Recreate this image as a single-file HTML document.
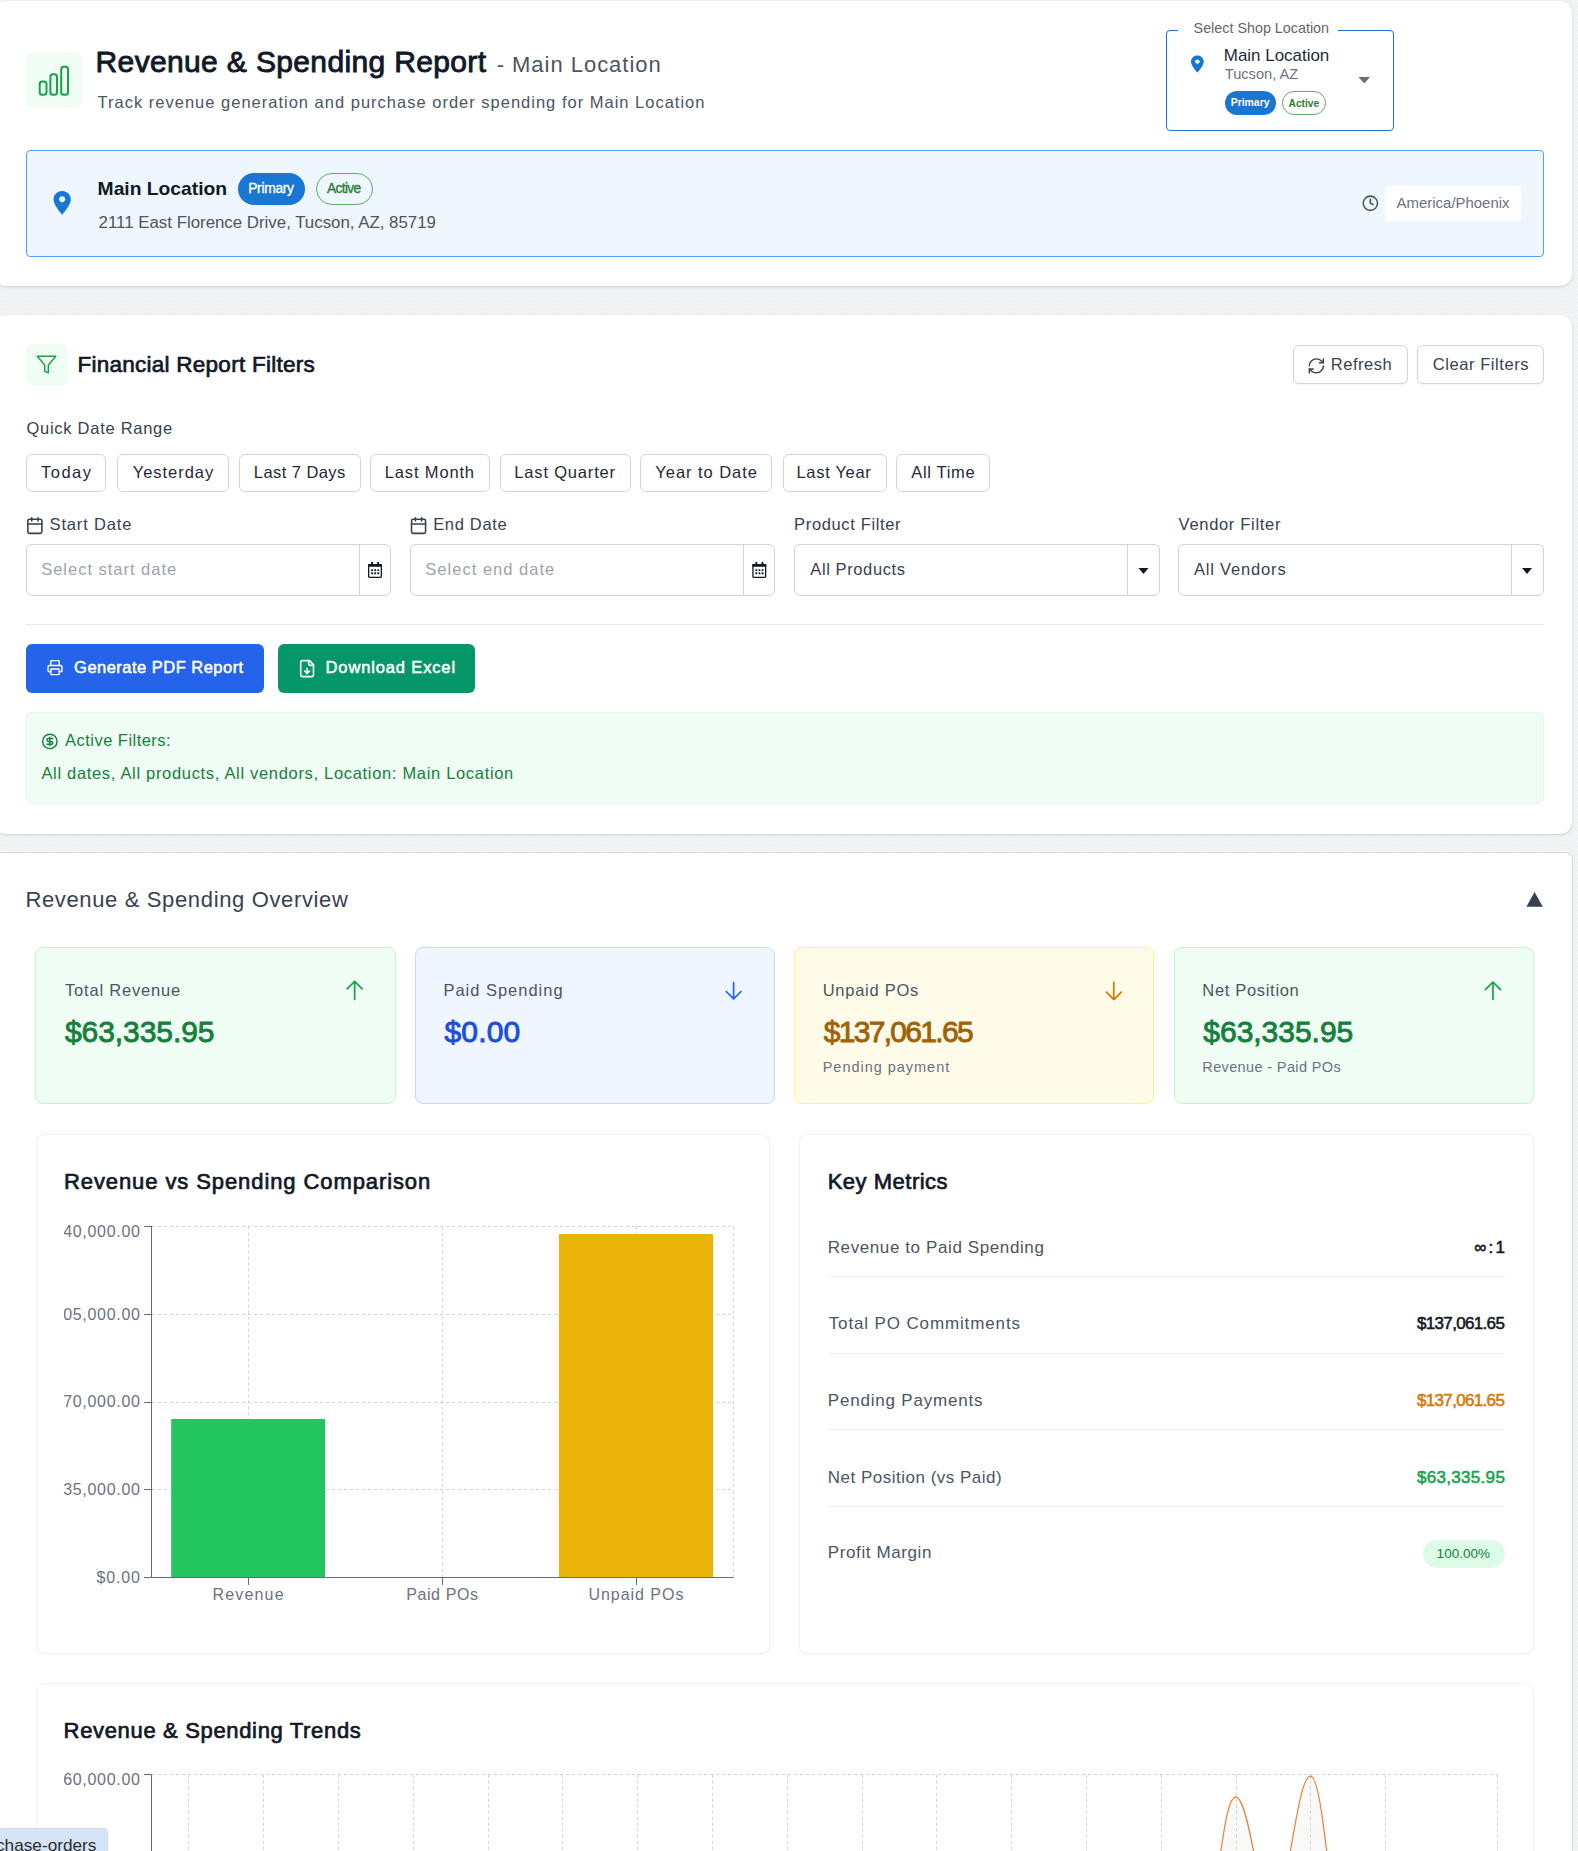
<!DOCTYPE html>
<html><head><meta charset="utf-8"><style>
html,body{margin:0;padding:0;}
body{width:1578px;height:1851px;position:relative;overflow:hidden;background-color:#f3f4f6;background-image:radial-gradient(circle at 1px 1px,rgba(0,0,20,.018) 0.6px,transparent 1px),radial-gradient(circle at 2.5px 3px,rgba(0,0,20,.018) 0.6px,transparent 1px);background-size:3px 4px;font-family:"Liberation Sans",sans-serif;}
.b{position:absolute;}
.t{position:absolute;line-height:1;white-space:nowrap;}
.clip{position:absolute;overflow:hidden;}
svg.ov{position:absolute;left:0;top:0;}
</style></head><body>
<div class="b" style="left:-6.00px;top:1.00px;width:1578.00px;height:285.00px;background:#fff;border-radius:12px;box-shadow:0 1px 3px rgba(0,0,0,.10),0 1px 2px rgba(0,0,0,.06)"></div>
<div class="b" style="left:-6.00px;top:315.00px;width:1578.00px;height:519.00px;background:#fff;border-radius:12px;box-shadow:0 1px 3px rgba(0,0,0,.10),0 1px 2px rgba(0,0,0,.06)"></div>
<div class="b" style="left:-5.00px;top:852.00px;width:1578.00px;height:1048.00px;background:#fff;border-radius:8px;border:1px solid #d7dbe0;box-sizing:border-box"></div>
<div class="b" style="left:26.00px;top:52.00px;width:56.00px;height:56.00px;background:#f0fdf4;border-radius:8px"></div>
<div class="b" style="left:1166.00px;top:30.00px;width:228.00px;height:101.00px;border:1px solid #1976d2;border-radius:4px;box-sizing:border-box"></div>
<div class="b" style="left:1178.00px;top:26.00px;width:160.00px;height:8.00px;background:#fff"></div>
<div class="b" style="left:1225.00px;top:91.00px;width:51.00px;height:24.00px;background:#1976d2;border-radius:12px"></div>
<div class="b" style="left:1281.70px;top:91.00px;width:44.10px;height:24.00px;border:1px solid #66a86a;border-radius:12px;box-sizing:border-box"></div>
<div class="b" style="left:26.00px;top:150.00px;width:1518.00px;height:107.00px;background:#eef6fe;border:1px solid #4fa3f3;border-radius:4px;box-sizing:border-box"></div>
<div class="b" style="left:238.00px;top:173.00px;width:67.00px;height:32.00px;background:#1976d2;border-radius:16px"></div>
<div class="b" style="left:316.00px;top:173.00px;width:57.00px;height:32.00px;border:1px solid #66a86a;border-radius:16px;box-sizing:border-box"></div>
<div class="b" style="left:1385.00px;top:186.00px;width:136.00px;height:35.00px;background:#fff;border-radius:4px"></div>
<div class="b" style="left:26.00px;top:344.00px;width:42.00px;height:42.00px;background:#f0fdf4;border-radius:8px"></div>
<div class="b" style="left:1292.60px;top:345.40px;width:115.00px;height:39.10px;background:#fff;border:1px solid #d1d5db;border-radius:6px;box-sizing:border-box;box-shadow:0 1px 2px rgba(0,0,0,.05)"></div>
<div class="b" style="left:1417.30px;top:345.40px;width:126.30px;height:39.10px;background:#fff;border:1px solid #d1d5db;border-radius:6px;box-sizing:border-box;box-shadow:0 1px 2px rgba(0,0,0,.05)"></div>
<div class="b" style="left:26.30px;top:453.60px;width:80.20px;height:38.00px;background:#fff;border:1px solid #d1d5db;border-radius:6px;box-sizing:border-box"></div>
<div class="b" style="left:117.30px;top:453.60px;width:112.10px;height:38.00px;background:#fff;border:1px solid #d1d5db;border-radius:6px;box-sizing:border-box"></div>
<div class="b" style="left:239.30px;top:453.60px;width:121.30px;height:38.00px;background:#fff;border:1px solid #d1d5db;border-radius:6px;box-sizing:border-box"></div>
<div class="b" style="left:370.10px;top:453.60px;width:119.50px;height:38.00px;background:#fff;border:1px solid #d1d5db;border-radius:6px;box-sizing:border-box"></div>
<div class="b" style="left:500.30px;top:453.60px;width:130.30px;height:38.00px;background:#fff;border:1px solid #d1d5db;border-radius:6px;box-sizing:border-box"></div>
<div class="b" style="left:640.30px;top:453.60px;width:131.50px;height:38.00px;background:#fff;border:1px solid #d1d5db;border-radius:6px;box-sizing:border-box"></div>
<div class="b" style="left:782.50px;top:453.60px;width:104.10px;height:38.00px;background:#fff;border:1px solid #d1d5db;border-radius:6px;box-sizing:border-box"></div>
<div class="b" style="left:896.30px;top:453.60px;width:93.40px;height:38.00px;background:#fff;border:1px solid #d1d5db;border-radius:6px;box-sizing:border-box"></div>
<div class="b" style="left:26.00px;top:544.00px;width:365.00px;height:52.00px;background:#fff;border:1px solid #cfd4da;border-radius:6px;box-sizing:border-box"></div>
<div class="b" style="left:359.00px;top:545.00px;width:1.00px;height:50.00px;background:#cfd4da"></div>
<div class="b" style="left:410.00px;top:544.00px;width:365.00px;height:52.00px;background:#fff;border:1px solid #cfd4da;border-radius:6px;box-sizing:border-box"></div>
<div class="b" style="left:743.00px;top:545.00px;width:1.00px;height:50.00px;background:#cfd4da"></div>
<div class="b" style="left:794.00px;top:544.00px;width:366.00px;height:52.00px;background:#fff;border:1px solid #cfd4da;border-radius:6px;box-sizing:border-box"></div>
<div class="b" style="left:1127.00px;top:545.00px;width:1.00px;height:50.00px;background:#cfd4da"></div>
<div class="b" style="left:1178.00px;top:544.00px;width:366.00px;height:52.00px;background:#fff;border:1px solid #cfd4da;border-radius:6px;box-sizing:border-box"></div>
<div class="b" style="left:1511.00px;top:545.00px;width:1.00px;height:50.00px;background:#cfd4da"></div>
<div class="b" style="left:26.00px;top:623.50px;width:1518.00px;height:1.20px;background:#e5e7eb"></div>
<div class="b" style="left:26.00px;top:644.00px;width:238.00px;height:48.60px;background:#2563eb;border-radius:6px"></div>
<div class="b" style="left:278.00px;top:644.00px;width:196.80px;height:48.60px;background:#059669;border-radius:6px"></div>
<div class="b" style="left:26.00px;top:712.20px;width:1518.00px;height:91.60px;background:#f0fdf4;border:1px solid #dcfce7;border-radius:6px;box-sizing:border-box"></div>
<div class="b" style="left:35.10px;top:946.90px;width:360.70px;height:157.40px;background:#f0fdf4;border:1px solid #bbf7d0;border-radius:8px;box-sizing:border-box"></div>
<div class="b" style="left:414.90px;top:946.90px;width:359.90px;height:157.40px;background:#eff6ff;border:1px solid #bfdbfe;border-radius:8px;box-sizing:border-box"></div>
<div class="b" style="left:794.30px;top:946.90px;width:360.20px;height:157.40px;background:#fefce8;border:1px solid #fef08a;border-radius:8px;box-sizing:border-box"></div>
<div class="b" style="left:1174.20px;top:946.90px;width:359.50px;height:157.40px;background:#f0fdf4;border:1px solid #bbf7d0;border-radius:8px;box-sizing:border-box"></div>
<div class="b" style="left:35.60px;top:1134.30px;width:734.90px;height:519.70px;background:#fff;border:1px solid #f1f2f4;border-radius:8px;box-sizing:border-box;box-shadow:0 1px 2px rgba(0,0,0,.04)"></div>
<div class="b" style="left:799.40px;top:1133.80px;width:734.60px;height:520.20px;background:#fff;border:1px solid #f1f2f4;border-radius:8px;box-sizing:border-box;box-shadow:0 1px 2px rgba(0,0,0,.04)"></div>
<div class="b" style="left:35.50px;top:1682.50px;width:1498.50px;height:217.50px;background:#fff;border:1px solid #f1f2f4;border-radius:8px;box-sizing:border-box;box-shadow:0 1px 2px rgba(0,0,0,.04)"></div>
<div class="b" style="left:828.70px;top:1275.80px;width:676.30px;height:1.00px;background:#eceef1"></div>
<div class="b" style="left:828.70px;top:1352.80px;width:676.30px;height:1.00px;background:#eceef1"></div>
<div class="b" style="left:828.70px;top:1428.80px;width:676.30px;height:1.00px;background:#eceef1"></div>
<div class="b" style="left:828.70px;top:1505.80px;width:676.30px;height:1.00px;background:#eceef1"></div>
<div class="b" style="left:1423.00px;top:1540.00px;width:82.00px;height:27.80px;background:#dcfce7;border-radius:14px"></div>
<div class="b" style="left:-2.00px;top:1828.30px;width:109.70px;height:31.70px;background:#d6e4f8;border:1px solid #d0dcee;border-radius:4px;box-sizing:border-box"></div>
<svg class="ov" width="1578" height="1851" viewBox="0 0 1578 1851">
<rect x="39.7" y="81.5" width="6.799999999999997" height="13.200000000000003" rx="2.5" fill="none" stroke="#16a34a" stroke-width="2"/>
<rect x="50.4" y="74.3" width="6.600000000000001" height="20.400000000000006" rx="2.5" fill="none" stroke="#16a34a" stroke-width="2"/>
<rect x="61.2" y="66.7" width="6.799999999999997" height="28.0" rx="2.5" fill="none" stroke="#16a34a" stroke-width="2"/>
<g transform="translate(1186.43,53.89) scale(0.914,0.855)"><path d="M12 2C8.13 2 5 5.13 5 9c0 5.25 7 13 7 13s7-7.75 7-13c0-3.87-3.13-7-7-7zm0 9.5c-1.38 0-2.5-1.12-2.5-2.5s1.12-2.5 2.5-2.5 2.5 1.12 2.5 2.5-1.12 2.5-2.5 2.5z" fill="#1976d2"/></g>
<g transform="translate(47.32,188.63) scale(1.236,1.185)"><path d="M12 2C8.13 2 5 5.13 5 9c0 5.25 7 13 7 13s7-7.75 7-13c0-3.87-3.13-7-7-7zm0 9.5c-1.38 0-2.5-1.12-2.5-2.5s1.12-2.5 2.5-2.5 2.5 1.12 2.5 2.5-1.12 2.5-2.5 2.5z" fill="#1976d2"/></g>
<path d="M1358.5 77 L1370 77 L1364.25 83.5 Z" fill="#6b6f76"/>
<g transform="translate(1362.4,195.3) scale(0.6625)" fill="none" stroke="#4b5563" stroke-width="2.4" stroke-linecap="round" stroke-linejoin="round"><circle cx="12" cy="12" r="10.8"/><polyline points="12 6 12 12 16 14"/></g>
<g transform="translate(35.5,353.5) scale(0.92)" fill="none" stroke="#16a34a" stroke-width="1.6" stroke-linejoin="round"><polygon points="22 3 2 3 10 12.46 10 19 14 21 14 12.46 22 3"/></g>
<g transform="translate(1307,356.5) scale(0.78)" fill="none" stroke="#374151" stroke-width="1.8" stroke-linecap="round" stroke-linejoin="round"><path d="M3 12a9 9 0 0 1 9-9 9.75 9.75 0 0 1 6.74 2.74L21 8"/><path d="M21 3v5h-5"/><path d="M21 12a9 9 0 0 1-9 9 9.75 9.75 0 0 1-6.74-2.74L3 16"/><path d="M8 16H3v5"/></g>
<g transform="translate(25.50,516.2) scale(0.78)" fill="none" stroke="#374151" stroke-width="2" stroke-linecap="round" stroke-linejoin="round"><rect x="3" y="4" width="18" height="18" rx="2"/><path d="M16 2v4"/><path d="M8 2v4"/><path d="M3 10h18"/></g>
<g transform="translate(409.20,516.2) scale(0.78)" fill="none" stroke="#374151" stroke-width="2" stroke-linecap="round" stroke-linejoin="round"><rect x="3" y="4" width="18" height="18" rx="2"/><path d="M16 2v4"/><path d="M8 2v4"/><path d="M3 10h18"/></g>
<g transform="translate(368,562)"><rect x="0.65" y="2.6" width="12.7" height="12.7" rx="0.8" fill="none" stroke="#111827" stroke-width="1.3"/><rect x="0" y="2" width="14" height="2.8" rx="0.8" fill="#111827"/><rect x="3.1" y="0" width="1.9" height="3.4" fill="#111827"/><rect x="9.2" y="0" width="1.9" height="3.4" fill="#111827"/><rect x="3.1" y="7.2" width="1.9" height="1.9" rx="0.5" fill="#111827"/><rect x="3.1" y="10.3" width="1.9" height="1.9" rx="0.5" fill="#111827"/><rect x="6.2" y="7.2" width="1.9" height="1.9" rx="0.5" fill="#111827"/><rect x="6.2" y="10.3" width="1.9" height="1.9" rx="0.5" fill="#111827"/><rect x="9.3" y="7.2" width="1.9" height="1.9" rx="0.5" fill="#111827"/><rect x="9.3" y="10.3" width="1.9" height="1.9" rx="0.5" fill="#111827"/></g>
<g transform="translate(752.3,562)"><rect x="0.65" y="2.6" width="12.7" height="12.7" rx="0.8" fill="none" stroke="#111827" stroke-width="1.3"/><rect x="0" y="2" width="14" height="2.8" rx="0.8" fill="#111827"/><rect x="3.1" y="0" width="1.9" height="3.4" fill="#111827"/><rect x="9.2" y="0" width="1.9" height="3.4" fill="#111827"/><rect x="3.1" y="7.2" width="1.9" height="1.9" rx="0.5" fill="#111827"/><rect x="3.1" y="10.3" width="1.9" height="1.9" rx="0.5" fill="#111827"/><rect x="6.2" y="7.2" width="1.9" height="1.9" rx="0.5" fill="#111827"/><rect x="6.2" y="10.3" width="1.9" height="1.9" rx="0.5" fill="#111827"/><rect x="9.3" y="7.2" width="1.9" height="1.9" rx="0.5" fill="#111827"/><rect x="9.3" y="10.3" width="1.9" height="1.9" rx="0.5" fill="#111827"/></g>
<path d="M1138.5 568 L1148.5 568 L1143.5 574 Z" fill="#111827"/>
<path d="M1522 568 L1532 568 L1527 574 Z" fill="#111827"/>
<g transform="translate(46.6,659.2) scale(0.7)" fill="none" stroke="#fff" stroke-width="2" stroke-linecap="round" stroke-linejoin="round"><path d="M6 18H4a2 2 0 0 1-2-2v-5a2 2 0 0 1 2-2h16a2 2 0 0 1 2 2v5a2 2 0 0 1-2 2h-2"/><path d="M6 9V3a1 1 0 0 1 1-1h10a1 1 0 0 1 1 1v6"/><rect x="6" y="14" width="12" height="8" rx="1"/></g>
<g transform="translate(297.5,659) scale(0.8)" fill="none" stroke="#fff" stroke-width="2" stroke-linecap="round" stroke-linejoin="round"><path d="M15 2H6a2 2 0 0 0-2 2v16a2 2 0 0 0 2 2h12a2 2 0 0 0 2-2V7Z"/><path d="M14 2v4a2 2 0 0 0 2 2h4"/><path d="M12 18v-6"/><path d="m9 15 3 3 3-3"/></g>
<g transform="translate(41.2,732.8) scale(0.72)" fill="none" stroke="#15803d" stroke-width="2" stroke-linecap="round" stroke-linejoin="round"><circle cx="12" cy="12" r="10"/><path d="M16 8h-6a2 2 0 1 0 0 4h4a2 2 0 1 1 0 4H8"/><path d="M12 18V6"/></g>
<path d="M1526.4 906.8 L1534.6 892 L1542.8 906.8 Z" fill="#374151"/>
<path d="M354.65 999.3000000000001 V981.4 M347.2 988.85 L354.65 981.4 L362.09999999999997 988.85" fill="none" stroke="#16a34a" stroke-width="1.7" stroke-linecap="round" stroke-linejoin="round"/>
<path d="M733.5999999999999 982.5 V998.9000000000001 M726.1999999999999 991.5000000000001 L733.5999999999999 998.9000000000001 L740.9999999999999 991.5000000000001" fill="none" stroke="#2563eb" stroke-width="1.7" stroke-linecap="round" stroke-linejoin="round"/>
<path d="M1113.8 982.1999999999999 V999.6 M1106.3999999999999 992.1999999999999 L1113.8 999.6 L1121.2 992.1999999999999" fill="none" stroke="#d97706" stroke-width="1.7" stroke-linecap="round" stroke-linejoin="round"/>
<path d="M1492.9499999999998 999.2 V982.0 M1485.3999999999999 989.5500000000001 L1492.9499999999998 982.0 L1500.4999999999998 989.5500000000001" fill="none" stroke="#16a34a" stroke-width="1.7" stroke-linecap="round" stroke-linejoin="round"/>
<path d="M152 1226.5 H733.5" style="stroke:#cfd3d8;stroke-width:1;stroke-dasharray:3 3;fill:none"/>
<path d="M152 1314.5 H733.5" style="stroke:#cfd3d8;stroke-width:1;stroke-dasharray:3 3;fill:none"/>
<path d="M152 1402.5 H733.5" style="stroke:#cfd3d8;stroke-width:1;stroke-dasharray:3 3;fill:none"/>
<path d="M152 1489.5 H733.5" style="stroke:#cfd3d8;stroke-width:1;stroke-dasharray:3 3;fill:none"/>
<path d="M248.5 1226.5 V1577" style="stroke:#cfd3d8;stroke-width:1;stroke-dasharray:3 3;fill:none"/>
<path d="M442.5 1226.5 V1577" style="stroke:#cfd3d8;stroke-width:1;stroke-dasharray:3 3;fill:none"/>
<path d="M636.5 1226.5 V1577" style="stroke:#cfd3d8;stroke-width:1;stroke-dasharray:3 3;fill:none"/>
<path d="M733.5 1226.5 V1577" style="stroke:#cfd3d8;stroke-width:1;stroke-dasharray:3 3;fill:none"/>
<rect x="171.2" y="1419" width="153.8" height="158.4" fill="#22c55e"/>
<rect x="558.9" y="1234" width="154.1" height="343.4" fill="#eab308"/>
<path d="M151.5 1226 V1577.5 H733.5" style="stroke:#666b73;stroke-width:1;fill:none"/>
<path d="M144 1226.5 H151.5" style="stroke:#666b73;stroke-width:1;fill:none"/>
<path d="M144 1314.5 H151.5" style="stroke:#666b73;stroke-width:1;fill:none"/>
<path d="M144 1402.5 H151.5" style="stroke:#666b73;stroke-width:1;fill:none"/>
<path d="M144 1489.5 H151.5" style="stroke:#666b73;stroke-width:1;fill:none"/>
<path d="M144 1577.5 H151.5" style="stroke:#666b73;stroke-width:1;fill:none"/>
<path d="M248.5 1577.5 V1585" style="stroke:#666b73;stroke-width:1;fill:none"/>
<path d="M442.5 1577.5 V1585" style="stroke:#666b73;stroke-width:1;fill:none"/>
<path d="M636.5 1577.5 V1585" style="stroke:#666b73;stroke-width:1;fill:none"/>
<path d="M152 1774.5 H1497.5" style="stroke:#cfd3d8;stroke-width:1;stroke-dasharray:3 3;fill:none"/>
<path d="M188.5 1774.6 V1860" style="stroke:#cfd3d8;stroke-width:1;stroke-dasharray:3 3;fill:none"/>
<path d="M263.5 1774.6 V1860" style="stroke:#cfd3d8;stroke-width:1;stroke-dasharray:3 3;fill:none"/>
<path d="M338.5 1774.6 V1860" style="stroke:#cfd3d8;stroke-width:1;stroke-dasharray:3 3;fill:none"/>
<path d="M413.5 1774.6 V1860" style="stroke:#cfd3d8;stroke-width:1;stroke-dasharray:3 3;fill:none"/>
<path d="M488.5 1774.6 V1860" style="stroke:#cfd3d8;stroke-width:1;stroke-dasharray:3 3;fill:none"/>
<path d="M562.5 1774.6 V1860" style="stroke:#cfd3d8;stroke-width:1;stroke-dasharray:3 3;fill:none"/>
<path d="M637.5 1774.6 V1860" style="stroke:#cfd3d8;stroke-width:1;stroke-dasharray:3 3;fill:none"/>
<path d="M712.5 1774.6 V1860" style="stroke:#cfd3d8;stroke-width:1;stroke-dasharray:3 3;fill:none"/>
<path d="M787.5 1774.6 V1860" style="stroke:#cfd3d8;stroke-width:1;stroke-dasharray:3 3;fill:none"/>
<path d="M862.5 1774.6 V1860" style="stroke:#cfd3d8;stroke-width:1;stroke-dasharray:3 3;fill:none"/>
<path d="M936.5 1774.6 V1860" style="stroke:#cfd3d8;stroke-width:1;stroke-dasharray:3 3;fill:none"/>
<path d="M1011.5 1774.6 V1860" style="stroke:#cfd3d8;stroke-width:1;stroke-dasharray:3 3;fill:none"/>
<path d="M1086.5 1774.6 V1860" style="stroke:#cfd3d8;stroke-width:1;stroke-dasharray:3 3;fill:none"/>
<path d="M1161.5 1774.6 V1860" style="stroke:#cfd3d8;stroke-width:1;stroke-dasharray:3 3;fill:none"/>
<path d="M1236.5 1774.6 V1860" style="stroke:#cfd3d8;stroke-width:1;stroke-dasharray:3 3;fill:none"/>
<path d="M1310.5 1774.6 V1860" style="stroke:#cfd3d8;stroke-width:1;stroke-dasharray:3 3;fill:none"/>
<path d="M1385.5 1774.6 V1860" style="stroke:#cfd3d8;stroke-width:1;stroke-dasharray:3 3;fill:none"/>
<path d="M1497.5 1774.6 V1860" style="stroke:#cfd3d8;stroke-width:1;stroke-dasharray:3 3;fill:none"/>
<path d="M151.5 1774.5 V1860 M144 1774.5 H151.5" style="stroke:#666b73;stroke-width:1;fill:none"/>
<path d="M1218 1870 C1224 1830 1228 1797 1235.8 1796.8 C1243 1797 1250 1830 1257 1870 Z" fill="rgba(215,215,205,0.15)" stroke="#e6833a" stroke-width="1.2"/>
<path d="M1287 1870 C1296 1820 1302 1776.5 1310.5 1776.2 C1318 1776.5 1323 1820 1329 1870 Z" fill="rgba(215,215,205,0.15)" stroke="#e6833a" stroke-width="1.2"/>
</svg>
<span class="t" style="left:95.60px;top:47.10px;font-size:30.00px;font-weight:400;color:#111827;letter-spacing:0.354px;-webkit-text-stroke:0.9px #111827;">Revenue &amp; Spending Report</span>
<span class="t" style="left:496.70px;top:53.50px;font-size:22.00px;font-weight:400;color:#4b5563;letter-spacing:0.973px;">- Main Location</span>
<span class="t" style="left:97.60px;top:93.97px;font-size:16.50px;font-weight:400;color:#4b5563;letter-spacing:1.001px;">Track revenue generation and purchase order spending for Main Location</span>
<span class="t" style="left:1193.60px;top:20.82px;font-size:14.33px;font-weight:400;color:#666666;letter-spacing:0.000px;">Select Shop Location</span>
<span class="t" style="left:1223.80px;top:47.88px;font-size:16.96px;font-weight:400;color:#1f2937;letter-spacing:0.000px;">Main Location</span>
<span class="t" style="left:1224.80px;top:67.48px;font-size:14.61px;font-weight:400;color:#6b7280;letter-spacing:0.000px;">Tucson, AZ</span>
<span class="t" style="left:1230.70px;top:98.43px;font-size:10.43px;font-weight:700;color:#ffffff;letter-spacing:0.000px;">Primary</span>
<span class="t" style="left:1288.50px;top:98.58px;font-size:10.26px;font-weight:700;color:#2e7d32;letter-spacing:0.000px;">Active</span>
<span class="t" style="left:97.60px;top:178.81px;font-size:19.28px;font-weight:700;color:#111827;letter-spacing:0.000px;">Main Location</span>
<span class="t" style="left:248.20px;top:182.07px;font-size:13.80px;font-weight:400;color:#ffffff;letter-spacing:-0.287px;-webkit-text-stroke:0.35px #ffffff;">Primary</span>
<span class="t" style="left:327.00px;top:182.07px;font-size:13.80px;font-weight:400;color:#2e7d32;letter-spacing:-0.680px;-webkit-text-stroke:0.35px #2e7d32;">Active</span>
<span class="t" style="left:98.60px;top:214.67px;font-size:16.85px;font-weight:400;color:#4b5563;letter-spacing:0.000px;">2111 East Florence Drive, Tucson, AZ, 85719</span>
<span class="t" style="left:1396.60px;top:195.50px;font-size:14.94px;font-weight:400;color:#6b7280;letter-spacing:0.000px;">America/Phoenix</span>
<span class="t" style="left:77.40px;top:353.88px;font-size:22.50px;font-weight:400;color:#111827;letter-spacing:0.262px;-webkit-text-stroke:0.7px #111827;">Financial Report Filters</span>
<span class="t" style="left:1330.70px;top:355.88px;font-size:16.50px;font-weight:400;color:#374151;letter-spacing:0.550px;">Refresh</span>
<span class="t" style="left:1432.80px;top:355.88px;font-size:16.50px;font-weight:400;color:#374151;letter-spacing:0.560px;">Clear Filters</span>
<span class="t" style="left:26.50px;top:419.98px;font-size:16.50px;font-weight:400;color:#374151;letter-spacing:0.724px;">Quick Date Range</span>
<span class="t" style="left:41.05px;top:463.58px;font-size:16.50px;font-weight:400;color:#1f2937;letter-spacing:1.480px;">Today</span>
<span class="t" style="left:132.80px;top:463.58px;font-size:16.50px;font-weight:400;color:#1f2937;letter-spacing:0.947px;">Yesterday</span>
<span class="t" style="left:253.85px;top:463.58px;font-size:16.50px;font-weight:400;color:#1f2937;letter-spacing:0.433px;">Last 7 Days</span>
<span class="t" style="left:384.85px;top:463.58px;font-size:16.50px;font-weight:400;color:#1f2937;letter-spacing:0.839px;">Last Month</span>
<span class="t" style="left:514.30px;top:463.58px;font-size:16.50px;font-weight:400;color:#1f2937;letter-spacing:0.826px;">Last Quarter</span>
<span class="t" style="left:655.30px;top:463.58px;font-size:16.50px;font-weight:400;color:#1f2937;letter-spacing:0.960px;">Year to Date</span>
<span class="t" style="left:796.50px;top:463.58px;font-size:16.50px;font-weight:400;color:#1f2937;letter-spacing:0.686px;">Last Year</span>
<span class="t" style="left:911.30px;top:463.58px;font-size:16.50px;font-weight:400;color:#1f2937;letter-spacing:0.657px;">All Time</span>
<span class="t" style="left:49.60px;top:515.77px;font-size:16.50px;font-weight:400;color:#374151;letter-spacing:0.833px;">Start Date</span>
<span class="t" style="left:433.20px;top:515.77px;font-size:16.50px;font-weight:400;color:#374151;letter-spacing:0.669px;">End Date</span>
<span class="t" style="left:794.10px;top:516.48px;font-size:16.50px;font-weight:400;color:#374151;letter-spacing:0.645px;">Product Filter</span>
<span class="t" style="left:1178.60px;top:516.48px;font-size:16.50px;font-weight:400;color:#374151;letter-spacing:0.696px;">Vendor Filter</span>
<span class="t" style="left:41.20px;top:560.77px;font-size:16.50px;font-weight:400;color:#9ca3af;letter-spacing:0.984px;">Select start date</span>
<span class="t" style="left:425.30px;top:560.77px;font-size:16.50px;font-weight:400;color:#9ca3af;letter-spacing:1.022px;">Select end date</span>
<span class="t" style="left:810.30px;top:560.98px;font-size:16.50px;font-weight:400;color:#374151;letter-spacing:0.601px;">All Products</span>
<span class="t" style="left:1193.90px;top:560.98px;font-size:16.50px;font-weight:400;color:#374151;letter-spacing:0.828px;">All Vendors</span>
<span class="t" style="left:74.10px;top:659.38px;font-size:16.50px;font-weight:400;color:#ffffff;letter-spacing:0.478px;-webkit-text-stroke:0.5px #ffffff;">Generate PDF Report</span>
<span class="t" style="left:325.60px;top:659.38px;font-size:16.50px;font-weight:400;color:#ffffff;letter-spacing:0.858px;-webkit-text-stroke:0.5px #ffffff;">Download Excel</span>
<span class="t" style="left:65.10px;top:732.18px;font-size:16.50px;font-weight:400;color:#15803d;letter-spacing:0.462px;">Active Filters:</span>
<span class="t" style="left:41.40px;top:765.08px;font-size:16.50px;font-weight:400;color:#15803d;letter-spacing:0.680px;">All dates, All products, All vendors, Location: Main Location</span>
<span class="t" style="left:25.40px;top:888.50px;font-size:22.00px;font-weight:400;color:#374151;letter-spacing:0.644px;">Revenue &amp; Spending Overview</span>
<span class="t" style="left:65.00px;top:982.27px;font-size:16.50px;font-weight:400;color:#4b5563;letter-spacing:0.816px;">Total Revenue</span>
<span class="t" style="left:65.00px;top:1017.20px;font-size:30.00px;font-weight:400;color:#15803d;letter-spacing:-0.074px;-webkit-text-stroke:0.9px #15803d;">$63,335.95</span>
<span class="t" style="left:443.40px;top:982.27px;font-size:16.50px;font-weight:400;color:#4b5563;letter-spacing:0.986px;">Paid Spending</span>
<span class="t" style="left:444.40px;top:1017.20px;font-size:30.00px;font-weight:400;color:#1d4ed8;letter-spacing:0.203px;-webkit-text-stroke:0.9px #1d4ed8;">$0.00</span>
<span class="t" style="left:822.70px;top:982.27px;font-size:16.50px;font-weight:400;color:#4b5563;letter-spacing:0.732px;">Unpaid POs</span>
<span class="t" style="left:823.70px;top:1017.20px;font-size:30.00px;font-weight:400;color:#a16207;letter-spacing:-1.685px;-webkit-text-stroke:0.9px #a16207;">$137,061.65</span>
<span class="t" style="left:822.70px;top:1059.58px;font-size:14.50px;font-weight:400;color:#6b7280;letter-spacing:0.977px;">Pending payment</span>
<span class="t" style="left:1202.30px;top:982.27px;font-size:16.50px;font-weight:400;color:#4b5563;letter-spacing:0.683px;">Net Position</span>
<span class="t" style="left:1203.30px;top:1017.20px;font-size:30.00px;font-weight:400;color:#15803d;letter-spacing:-0.018px;-webkit-text-stroke:0.9px #15803d;">$63,335.95</span>
<span class="t" style="left:1202.30px;top:1059.58px;font-size:14.50px;font-weight:400;color:#6b7280;letter-spacing:0.363px;">Revenue - Paid POs</span>
<span class="t" style="left:64.00px;top:1171.00px;font-size:22.00px;font-weight:400;color:#111827;letter-spacing:0.905px;-webkit-text-stroke:0.7px #111827;">Revenue vs Spending Comparison</span>
<span class="t" style="left:827.70px;top:1170.70px;font-size:22.00px;font-weight:400;color:#111827;letter-spacing:0.499px;-webkit-text-stroke:0.7px #111827;">Key Metrics</span>
<span class="t" style="left:212.50px;top:1586.70px;font-size:16.00px;font-weight:400;color:#6b7280;letter-spacing:1.175px;">Revenue</span>
<span class="t" style="left:406.20px;top:1586.70px;font-size:16.00px;font-weight:400;color:#6b7280;letter-spacing:0.602px;">Paid POs</span>
<span class="t" style="left:588.50px;top:1586.70px;font-size:16.00px;font-weight:400;color:#6b7280;letter-spacing:0.959px;">Unpaid POs</span>
<span class="t" style="left:96.40px;top:1570.20px;font-size:16.00px;font-weight:400;color:#6b7280;letter-spacing:0.865px;">$0.00</span>
<span class="t" style="left:63.20px;top:1482.20px;font-size:16.00px;font-weight:400;color:#6b7280;letter-spacing:0.690px;">35,000.00</span>
<span class="t" style="left:63.20px;top:1394.40px;font-size:16.00px;font-weight:400;color:#6b7280;letter-spacing:0.690px;">70,000.00</span>
<span class="t" style="left:827.70px;top:1239.25px;font-size:17.00px;font-weight:400;color:#4b5563;letter-spacing:0.604px;">Revenue to Paid Spending</span>
<span class="t" style="left:828.70px;top:1315.25px;font-size:17.00px;font-weight:400;color:#4b5563;letter-spacing:0.870px;">Total PO Commitments</span>
<span class="t" style="left:827.80px;top:1391.75px;font-size:17.00px;font-weight:400;color:#4b5563;letter-spacing:0.800px;">Pending Payments</span>
<span class="t" style="left:827.80px;top:1468.55px;font-size:17.00px;font-weight:400;color:#4b5563;letter-spacing:0.496px;">Net Position (vs Paid)</span>
<span class="t" style="left:827.80px;top:1544.25px;font-size:17.00px;font-weight:400;color:#4b5563;letter-spacing:0.608px;">Profit Margin</span>
<span class="t" style="left:1474.30px;top:1239.05px;font-size:17.00px;font-weight:400;color:#111827;letter-spacing:-1.297px;-webkit-text-stroke:0.55px #111827;">∞ : 1</span>
<span class="t" style="left:1417.00px;top:1314.65px;font-size:17.00px;font-weight:400;color:#111827;letter-spacing:-0.668px;-webkit-text-stroke:0.55px #111827;">$137,061.65</span>
<span class="t" style="left:1417.00px;top:1392.05px;font-size:17.00px;font-weight:400;color:#d97706;letter-spacing:-0.668px;-webkit-text-stroke:0.55px #d97706;">$137,061.65</span>
<span class="t" style="left:1416.90px;top:1469.15px;font-size:17.00px;font-weight:400;color:#16a34a;letter-spacing:0.319px;-webkit-text-stroke:0.55px #16a34a;">$63,335.95</span>
<span class="t" style="left:1436.60px;top:1547.43px;font-size:13.50px;font-weight:400;color:#15803d;letter-spacing:0.035px;">100.00%</span>
<span class="t" style="left:63.60px;top:1720.10px;font-size:22.00px;font-weight:400;color:#111827;letter-spacing:0.662px;-webkit-text-stroke:0.7px #111827;">Revenue &amp; Spending Trends</span>
<span class="t" style="left:53.61px;top:1224.40px;font-size:16.00px;font-weight:400;color:#6b7280;letter-spacing:0.690px;clip-path:inset(-10px -10px -10px 10.39px);">140,000.00</span>
<span class="t" style="left:53.61px;top:1307.00px;font-size:16.00px;font-weight:400;color:#6b7280;letter-spacing:0.690px;clip-path:inset(-10px -10px -10px 10.39px);">105,000.00</span>
<span class="t" style="left:53.61px;top:1772.40px;font-size:16.00px;font-weight:400;color:#6b7280;letter-spacing:0.690px;clip-path:inset(-10px -10px -10px 10.39px);">160,000.00</span>
<span class="t" style="left:-4.00px;top:1836.86px;font-size:17.22px;font-weight:400;color:#2b2b2b;letter-spacing:0.000px;">chase-orders</span>

</body></html>
